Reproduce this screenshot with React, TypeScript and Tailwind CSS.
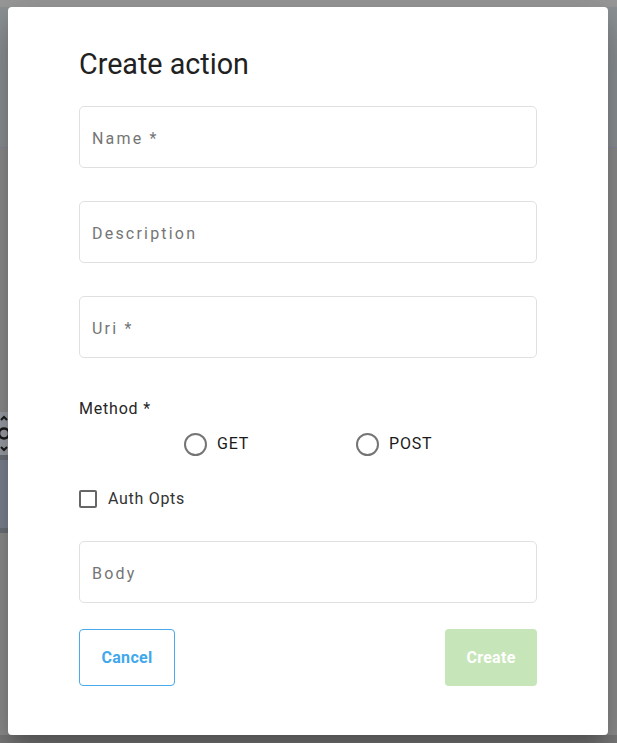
import React from "react";

function TextField({ label }: { label: string }) {
  return (
    <div className="h-[62px] w-full rounded-[5px] border border-[#e0e0e0] flex items-center px-[12px] pt-[3px]">
      <span className="text-[16px] tracking-[2.2px] text-[#757575]">{label}</span>
    </div>
  );
}

function Radio({ label }: { label: string }) {
  return (
    <label className="flex items-center gap-[10px] w-[172px]">
      <span className="w-[23px] h-[23px] rounded-full border-2 border-[#757575]" />
      <span className="text-[16px] tracking-[0.8px] text-[#1a1a1a]">{label}</span>
    </label>
  );
}

export default function App() {
  return (
    <div className="relative w-[617px] h-[743px] overflow-hidden bg-[#8f8f8f] font-['Roboto',sans-serif]">
      {/* page behind the overlay */}
      <div className="absolute left-0 top-0 w-full h-[148px] bg-[#8e9396] border-b border-[#8a8aa2]" />
      <div className="absolute left-0 top-0 w-full h-[7px] bg-[#9a9a9a]" />
      <div className="absolute left-0 top-[412px] w-[8px] h-[43px] bg-[#9ea2a9]">
        <svg width="8" height="43" viewBox="0 0 8 43">
          <path d="M1 8 L4 5 L7 8 M1 35 L4 38 L7 35" stroke="#1a1a1a" strokeWidth="2" fill="none" />
          <circle cx="4" cy="21.5" r="5" stroke="#1a1a1a" strokeWidth="2.5" fill="none" />
        </svg>
      </div>
      <div className="absolute left-0 top-[455px] w-[8px] h-[5px] bg-[#6f747c]" />
      <div className="absolute left-0 top-[460px] w-[8px] h-[68px] bg-[#7e8594]" />
      <div className="absolute left-0 top-[528px] w-[8px] h-[5px] bg-[#6f747c]" />
      <div className="absolute left-0 bottom-0 w-full h-[8px] bg-[#7b7b7b]" />

      <div className="relative ml-[8px] mt-[7px] w-[600px] h-[728px] bg-white rounded-[4px] shadow-[0_11px_15px_-7px_rgba(0,0,0,0.2),0_24px_38px_3px_rgba(0,0,0,0.14),0_9px_46px_8px_rgba(0,0,0,0.12)] px-[71px] pt-[40px]">
        <h2 className="text-[28.7px] leading-[34px] text-[#212121]">Create action</h2>

        <div className="mt-[25px] flex flex-col gap-[33px]">
          <TextField label="Name *" />
          <TextField label="Description" />
          <TextField label="Uri *" />
        </div>

        <div className="mt-[41px] text-[16px] leading-[19px] tracking-[0.8px] text-[#262626]">Method *</div>
        <div className="mt-[14px] pl-[105px] flex items-center">
          <Radio label="GET" />
          <Radio label="POST" />
        </div>

        <label className="mt-[31px] flex items-center gap-[11px]">
          <span className="w-[18px] h-[18px] rounded-[2px] border-2 border-[#666666]" />
          <span className="text-[16px] tracking-[0.7px] text-[#333333]">Auth Opts</span>
        </label>

        <div className="mt-[30px]">
          <TextField label="Body" />
        </div>

        <div className="mt-[26px] flex items-center justify-between">
          <button className="w-[96px] h-[57px] rounded-[4px] border border-[#4aaaec] text-[16px] font-bold tracking-[0.3px] text-[#42a8ec]">
            Cancel
          </button>
          <button className="w-[92px] h-[57px] rounded-[4px] bg-[#c6e6b9] text-[16px] font-bold tracking-[0.3px] text-white">
            Create
          </button>
        </div>
      </div>
    </div>
  );
}
